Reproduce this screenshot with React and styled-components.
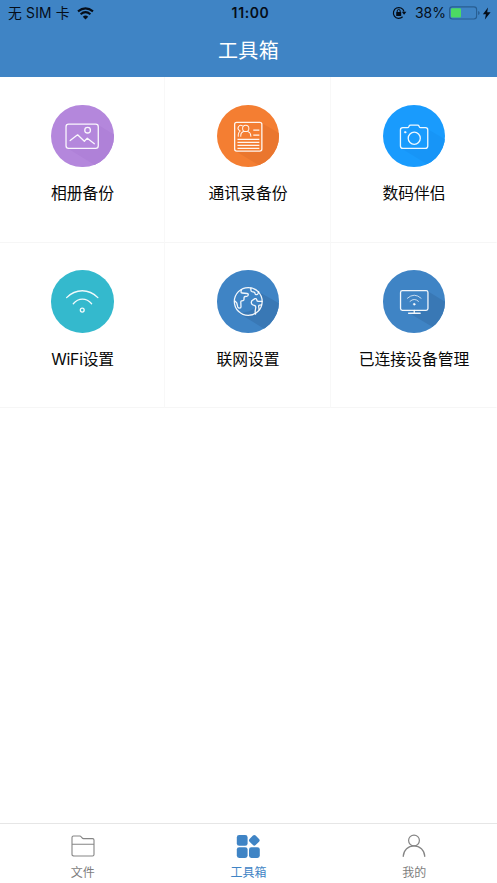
import React from "react";
import styled, { createGlobalStyle } from "styled-components";

const GlobalStyle = createGlobalStyle`
  * { box-sizing: border-box; }
  body { margin: 0; background: #fff; font-family: Inter, "Noto Sans CJK SC", sans-serif; }
`;

const Screen = styled.div`
  display: flex;
  flex-direction: column;
  height: 883px;
  width: 100%;
  overflow: hidden;
  background: #fff;
`;

const Header = styled.header`
  flex: none;
  height: 77px;
  background: #3f84c5;
`;

const StatusBar = styled.div`
  display: grid;
  grid-template-columns: 1fr auto 1fr;
  align-items: center;
  height: 26px;
  padding: 0 5px 0 8px;
  color: #050d18;
  font-size: 14px;
  line-height: 26px;
  white-space: nowrap;
`;

const StatusGroup = styled.div`
  display: flex;
  align-items: center;
  justify-content: ${(p) => (p.$end ? "flex-end" : "flex-start")};
  svg { display: block; flex: none; }
`;

const Carrier = styled.span`
  margin-right: 7px;
  font-size: 13.8px;
  letter-spacing: 0.2px;
`;

const Clock = styled.span`
  font-size: 14px;
  font-weight: 600;
  letter-spacing: 0.6px;
  padding-left: 1px;
`;

const Percent = styled.span`
  margin: 0 3px 0 8px;
  font-size: 14px;
  letter-spacing: 0;
`;

const Title = styled.h1`
  margin: 0;
  height: 51px;
  color: #fff;
  font-size: 20px;
  font-weight: 400;
  line-height: 51px;
  text-align: center;
  letter-spacing: 0.3px;
`;

const Grid = styled.main`
  display: grid;
  grid-template-columns: 165px 166px 166px;
  grid-auto-rows: 165.5px;
  flex: 1;
  align-content: start;
`;

const Cell = styled.div`
  display: flex;
  flex-direction: column;
  align-items: center;
  padding: 27.5px 0 0 1px;
  border-right: 1px solid ${(p) => (p.$last ? "transparent" : "#f8f8f8")};
  border-bottom: 1px solid #f6f6f6;
`;

const Disc = styled.div`
  width: 62.5px;
  height: 62.5px;
  border-radius: 50%;
  overflow: hidden;
  background: ${(p) => p.$color};
  svg { display: block; width: 100%; height: 100%; }
`;

const CellLabel = styled.div`
  margin-top: 13.4px;
  color: #080808;
  font-size: 15.8px;
  line-height: 28px;
  white-space: nowrap;
  letter-spacing: ${(p) => (p.$tight ? "-0.25px" : "0")};
`;

const TabBar = styled.nav`
  display: grid;
  grid-template-columns: repeat(3, 1fr);
  flex: none;
  height: 60px;
  border-top: 1px solid #e6e6e6;
`;

const Tab = styled.div`
  display: flex;
  flex-direction: column;
  align-items: center;
  padding-top: 10px;
  color: ${(p) => (p.$active ? "#3f84c5" : "#7d7d7d")};
  font-size: 12px;
  line-height: 20px;
  svg { display: block; margin-bottom: 5px; }
`;

function DiscIcon({ shadow, shade, children }) {
  return (
    <svg viewBox="0 0 62 62" fill="none">
      {shadow && <path d={shadow} fill={shade} />}
      <g stroke="#fff" strokeOpacity="0.93" strokeWidth="1.3" strokeLinecap="round" strokeLinejoin="round">
        {children}
      </g>
    </svg>
  );
}

const tools = [
  {
    label: "相册备份",
    color: "#b487dc",
    shade: "#af81d8",
    shadow: "M46.5 19.5 L72 35 V77 L15.5 42.5 H45 Q47 42 47 40Z",
    art: (
      <>
        <rect x="14.9" y="18.9" width="32" height="24.2" rx="2.6" />
        <circle cx="36.3" cy="25" r="2.8" />
        <path d="M19 35.3 26.4 29.6 33.1 35.9 36 32.9 43 38.4" />
      </>
    ),
  },
  {
    label: "通讯录备份",
    color: "#f47e32",
    shade: "#ea762e",
    shadow: "M44.5 18 L72 34 V78 L18 45.5 H43 Q45 45 45 43Z",
    art: (
      <>
        <rect x="17.5" y="17.2" width="27" height="28.5" rx="2" />
        <g strokeWidth="1">
          <circle cx="28.5" cy="23.3" r="3.1" />
          <path d="M25.1 20.6a2.7 2.7 0 0 0-2.8 4.8M21.1 31v-1.4c0-1.8.6-2.9 2-3.9M23.6 31v-1c0-1.8.9-3 2.6-3.7M30.8 26.4c1.8.8 2.8 2.1 2.8 4.6" />
        </g>
        <path strokeWidth="1.2" d="M36 25h6M36 29.9h6" strokeLinecap="butt" />
        <path strokeWidth="1.2" d="M20.3 34h21.7M20.3 37.1h21.7M20.3 40.1h21.7M20.3 43h21.7" strokeLinecap="butt" />
      </>
    ),
  },
  {
    label: "数码伴侣",
    color: "#199bfd",
    shade: "#1795f7",
    shadow: "M44.5 24 L72 40 V76 L18 43 H43 Q45 42 45 41Z",
    last: true,
    art: (
      <>
        <path d="M19.7 22.5h4.6q1 0 1.3-.8l.3-.8q.4-.9 1.4-.9h7q1 0 1.4.9l.3.8q.3.8 1.3.8h4.9q2.2 0 2.2 2.2v16q0 2.4-2.4 2.4H19.7q-2.4 0-2.4-2.4v-16q0-2.2 2.4-2.2Z" />
        <circle cx="31" cy="33" r="6" />
        <circle cx="22" cy="27" r=".8" fill="#fff" strokeWidth=".7" />
      </>
    ),
  },
  {
    label: "WiFi设置",
    color: "#34b9cd",
    tight: true,
    art: (
      <>
        <path d="M15.5 27.4Q22.3 20.6 31 20.6T46.5 27.4M22.1 33.5Q26 28.9 31.2 28.9T40.3 33.5" strokeWidth="1.3" />
        <circle cx="31" cy="39.8" r="1.9" strokeWidth="1.3" />
      </>
    ),
  },
  {
    label: "联网设置",
    color: "#3f84c5",
    shade: "#3978b5",
    shadow: "M41.2 21.5 L72 39 V74 L21 42.5 Q35 43 45 31Z",
    art: (
      <>
        <circle cx="31" cy="31.2" r="13.8" />
        <path d="M24.2 19.4 23.8 21.7q0 1 1.1 1.1l5 .5q1.3.2 1.1 1.5-.2 1.2-1.5 1.3l-1.7.2q-1 .2-1 1.3v1.5q0 1-1 1.2l-1.4.3q-.8.2-.8 1.2l.2 4.7q0 1.3-1.2 1.4-1.5.1-2-1.2l-1-4-1.6-1.8M33.6 17.7v2.2q0 1.3 1.2 1.6l1.8.4q1 .2 1.1 1.3.2 1.4 1.4 1.3 1 0 1.5-1l.7-2M44.6 31.2h-3.4q-1.6 0-1.8-1.6-.3-1.6-1.7-1.2l-2 1.2q-2 1.1-1.6 3.2.4 1.8 2.1 2.1 2 .2 2.3 2l-.6 3.6q-.2 1.7.3 3.2M44.2 34.6l-1.8.2q-1.4.3-1 1.8l.4 2.8" />
      </>
    ),
  },
  {
    label: "已连接设备管理",
    color: "#3f84c5",
    shade: "#3978b5",
    shadow: "M44.5 21 L72 38 V70 L25.5 42.5 29 40 H43 Q45 40 45 38Z",
    last: true,
    art: (
      <>
        <rect x="17.4" y="20.4" width="27.2" height="19.6" rx="1.8" />
        <path d="M31 40v2.7M25.4 42.9h11.5" />
        <path d="M24.2 28Q31 21.8 37.8 28M26.8 31.1Q31 27.1 35.2 31.1" strokeWidth=".95" strokeOpacity=".75" />
        <circle cx="31" cy="34" r="1" fill="#fff" strokeWidth=".4" />
      </>
    ),
  },
];

const WifiStatus = () => (
  <svg width="17" height="13" viewBox="0 0 17 13" fill="none" stroke="#050d18" strokeWidth="2.1">
    <path d="M1 4.4Q8.5-1.8 16 4.4M3.6 7.2Q8.5 3.1 13.4 7.2" />
    <path d="M5.8 9.7Q8.5 7.4 11.2 9.7L8.5 12.4Z" fill="#050d18" stroke="none" />
  </svg>
);

const RotationLock = () => (
  <svg width="15" height="14" viewBox="0 0 15 14" fill="none" stroke="#050d18">
    <path d="M10.6 10.8A5.4 5.4 0 1 1 12 5.5" strokeWidth="1.2" />
    <path d="M9.8 5.7h4.6L12.1 8.8Z" fill="#050d18" stroke="none" />
    <rect x="4.2" y="6.1" width="5" height="3.9" rx=".5" fill="#050d18" stroke="none" />
    <path d="M5.2 6.2V5a1.5 1.5 0 0 1 3 0v1.2" strokeWidth="1" />
  </svg>
);

const Battery = () => (
  <svg width="33" height="14" viewBox="0 0 33 14" fill="none">
    <rect x=".6" y=".9" width="27" height="12.1" rx="2.7" stroke="#285d91" strokeWidth="1.1" />
    <rect x="2" y="2.3" width="10" height="9.3" rx="1" fill="#4cdb63" />
    <path d="M29.1 4.9q1.6.6 1.6 2.1t-1.6 2.1Z" fill="#285d91" />
  </svg>
);

const Bolt = () => (
  <svg width="10" height="13" viewBox="0 0 10 13">
    <path d="M6 .6 .9 7.3h3L2.9 12.6 8.6 5.2H5.2Z" fill="#050d18" />
  </svg>
);

const FolderIcon = () => (
  <svg width="24" height="24" viewBox="0 0 24 24" fill="none" stroke="#858585" strokeWidth="1.1" strokeLinejoin="round">
    <path d="M1 20.5v-17q0-1.5 1.5-1.5h6.2q1 0 1.5.8l.9 1.1q.5.7 1.4.7h9q1.5 0 1.5 1.5v14.4q0 1.5-1.5 1.5h-18Q1 22 1 20.5ZM1 10.3h22" />
  </svg>
);

const ToolboxIcon = () => (
  <svg width="24" height="24" viewBox="0 0 24 24" fill="#3f84c5">
    <rect x=".8" y="1" width="10.8" height="10.8" rx="2.4" />
    <rect x=".8" y="13.2" width="10.8" height="10.8" rx="2.4" />
    <rect x="13" y="13.2" width="10.8" height="10.8" rx="2.4" />
    <rect x="14" y="2" width="8.6" height="8.6" rx="1.9" transform="rotate(45 18.3 6.3)" />
  </svg>
);

const UserIcon = () => (
  <svg width="24" height="24" viewBox="0 0 24 24" fill="none" stroke="#858585" strokeWidth="1.2" strokeLinecap="round">
    <circle cx="12" cy="6.5" r="5.4" />
    <path d="M1.2 22.4C1.6 16 6.2 11.9 12 11.9S22.4 16 22.8 22.4" />
  </svg>
);

export default function App() {
  return (
    <Screen>
      <GlobalStyle />
      <Header>
        <StatusBar>
          <StatusGroup>
            <Carrier>无 SIM 卡</Carrier>
            <WifiStatus />
          </StatusGroup>
          <Clock>11:00</Clock>
          <StatusGroup $end>
            <RotationLock />
            <Percent>38%</Percent>
            <Battery />
            <Bolt />
          </StatusGroup>
        </StatusBar>
        <Title>工具箱</Title>
      </Header>
      <Grid>
        {tools.map((t) => (
          <Cell key={t.label} $last={t.last}>
            <Disc $color={t.color}>
              <DiscIcon shadow={t.shadow} shade={t.shade}>{t.art}</DiscIcon>
            </Disc>
            <CellLabel $tight={t.tight}>{t.label}</CellLabel>
          </Cell>
        ))}
      </Grid>
      <TabBar>
        <Tab><FolderIcon />文件</Tab>
        <Tab $active><ToolboxIcon />工具箱</Tab>
        <Tab><UserIcon />我的</Tab>
      </TabBar>
    </Screen>
  );
}
